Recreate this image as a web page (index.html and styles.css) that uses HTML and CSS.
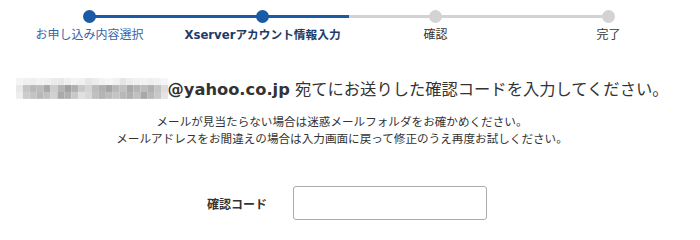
FILE: index.html
```html
<!DOCTYPE html>
<html lang="ja">
<head>
<meta charset="utf-8">
<title>確認コード</title>
<link rel="stylesheet" href="styles.css">
</head>
<body>
<ol class="steps">
  <li class="step done"><span class="step-label">お申し込み内容選択</span></li>
  <li class="step current"><span class="step-label">Xserverアカウント情報入力</span></li>
  <li class="step"><span class="step-label">確認</span></li>
  <li class="step"><span class="step-label">完了</span></li>
</ol>
<main class="content">
  <p class="message"><svg class="mosaic" width="152" height="21" viewBox="0 0 154 21" aria-hidden="true">
    <g>
      <rect x="0" y="0" width="7" height="7" fill="#f4f4f4"/><rect x="7" y="0" width="7" height="7" fill="#f0f0f0"/><rect x="14" y="0" width="7" height="7" fill="#eeeeee"/><rect x="21" y="0" width="7" height="7" fill="#f2f2f2"/><rect x="28" y="0" width="7" height="7" fill="#f0f0f0"/><rect x="35" y="0" width="7" height="7" fill="#eaeaea"/><rect x="42" y="0" width="7" height="7" fill="#e8e8e8"/><rect x="49" y="0" width="7" height="7" fill="#eeeeee"/><rect x="56" y="0" width="7" height="7" fill="#f4f4f4"/><rect x="63" y="0" width="7" height="7" fill="#f0f0f0"/><rect x="70" y="0" width="7" height="7" fill="#e6e6e6"/><rect x="77" y="0" width="7" height="7" fill="#ececec"/><rect x="84" y="0" width="7" height="7" fill="#f2f2f2"/><rect x="91" y="0" width="7" height="7" fill="#f6f6f6"/><rect x="98" y="0" width="7" height="7" fill="#f0f0f0"/><rect x="105" y="0" width="7" height="7" fill="#e4e4e4"/><rect x="112" y="0" width="7" height="7" fill="#ececec"/><rect x="119" y="0" width="7" height="7" fill="#f0f0f0"/><rect x="126" y="0" width="7" height="7" fill="#f2f2f2"/><rect x="133" y="0" width="7" height="7" fill="#eeeeee"/><rect x="140" y="0" width="7" height="7" fill="#f0f0f0"/><rect x="147" y="0" width="7" height="7" fill="#f6f6f6"/>
      <rect x="0" y="7" width="7" height="7" fill="#e8e8e8"/><rect x="7" y="7" width="7" height="7" fill="#c4c4c4"/><rect x="14" y="7" width="7" height="7" fill="#b8b8b8"/><rect x="21" y="7" width="7" height="7" fill="#bcbcbc"/><rect x="28" y="7" width="7" height="7" fill="#a8a8a8"/><rect x="35" y="7" width="7" height="7" fill="#cccccc"/><rect x="42" y="7" width="7" height="7" fill="#b4b4b4"/><rect x="49" y="7" width="7" height="7" fill="#a0a0a0"/><rect x="56" y="7" width="7" height="7" fill="#b0b0b0"/><rect x="63" y="7" width="7" height="7" fill="#c8c8c8"/><rect x="70" y="7" width="7" height="7" fill="#d4d4d4"/><rect x="77" y="7" width="7" height="7" fill="#bcbcbc"/><rect x="84" y="7" width="7" height="7" fill="#b0b0b0"/><rect x="91" y="7" width="7" height="7" fill="#a4a4a4"/><rect x="98" y="7" width="7" height="7" fill="#b8b8b8"/><rect x="105" y="7" width="7" height="7" fill="#c0c0c0"/><rect x="112" y="7" width="7" height="7" fill="#a8a8a8"/><rect x="119" y="7" width="7" height="7" fill="#b4b4b4"/><rect x="126" y="7" width="7" height="7" fill="#bcbcbc"/><rect x="133" y="7" width="7" height="7" fill="#b0b0b0"/><rect x="140" y="7" width="7" height="7" fill="#c4c4c4"/><rect x="147" y="7" width="7" height="7" fill="#dcdcdc"/>
      <rect x="0" y="14" width="7" height="7" fill="#eeeeee"/><rect x="7" y="14" width="7" height="7" fill="#cccccc"/><rect x="14" y="14" width="7" height="7" fill="#c4c4c4"/><rect x="21" y="14" width="7" height="7" fill="#b8b8b8"/><rect x="28" y="14" width="7" height="7" fill="#c0c0c0"/><rect x="35" y="14" width="7" height="7" fill="#d0d0d0"/><rect x="42" y="14" width="7" height="7" fill="#aaaaaa"/><rect x="49" y="14" width="7" height="7" fill="#b0b0b0"/><rect x="56" y="14" width="7" height="7" fill="#c8c8c8"/><rect x="63" y="14" width="7" height="7" fill="#e0e0e0"/><rect x="70" y="14" width="7" height="7" fill="#d8d8d8"/><rect x="77" y="14" width="7" height="7" fill="#c0c0c0"/><rect x="84" y="14" width="7" height="7" fill="#b4b4b4"/><rect x="91" y="14" width="7" height="7" fill="#bcbcbc"/><rect x="98" y="14" width="7" height="7" fill="#c4c4c4"/><rect x="105" y="14" width="7" height="7" fill="#b8b8b8"/><rect x="112" y="14" width="7" height="7" fill="#b0b0b0"/><rect x="119" y="14" width="7" height="7" fill="#c0c0c0"/><rect x="126" y="14" width="7" height="7" fill="#a8a8a8"/><rect x="133" y="14" width="7" height="7" fill="#b8b8b8"/><rect x="140" y="14" width="7" height="7" fill="#c8c8c8"/><rect x="147" y="14" width="7" height="7" fill="#e4e4e4"/>
    </g>
  </svg><strong class="email">@yahoo.co.jp</strong> 宛てにお送りした確認コードを入力してください。</p>
  <p class="note">メールが見当たらない場合は迷惑メールフォルダをお確かめください。<br>メールアドレスをお間違えの場合は入力画面に戻って修正のうえ再度お試しください。</p>
  <div class="form-row">
    <label class="form-label" for="code">確認コード</label>
    <input class="form-input" id="code" type="text">
  </div>
</main>
</body>
</html>
```

FILE: styles.css
```css
html, body {
  margin: 0;
  padding: 0;
  background: #ffffff;
}

body {
  font-family: "DejaVu Sans", "Noto Sans CJK JP", sans-serif;
  color: #333333;
  width: 700px;
}

.steps {
  list-style: none;
  margin: 0;
  padding: 0 5px 0 3px;
  display: flex;
}

.step {
  flex: 1;
  position: relative;
  text-align: center;
  padding-top: 28px;
  height: 14px;
}

.step::before {
  content: "";
  position: absolute;
  top: 15px;
  left: 0;
  right: 0;
  height: 3px;
  background: #d3d3d3;
}

.step:first-child::before { left: 50%; }
.step:last-child::before { right: 50%; }

.step::after {
  content: "";
  position: absolute;
  top: 10px;
  left: 50%;
  width: 13px;
  height: 13px;
  margin-left: -6.5px;
  border-radius: 50%;
  background: #d3d3d3;
}

.step.done::before,
.step.current::before,
.step.done::after,
.step.current::after {
  background: #1b5aa5;
}

.step-label {
  display: block;
  font-size: 12px;
  line-height: 14px;
  white-space: nowrap;
  color: #333333;
}

.step.done .step-label { color: #3a64a8; }
.step.current .step-label { color: #1f3a68; font-weight: bold; font-size: 11.7px; }

.content {
  padding-right: 16px;
  text-align: center;
}

.message {
  margin: 36px 0 0;
  font-size: 16.3px;
  line-height: 24px;
  white-space: nowrap;
}

.mosaic {
  display: inline-block;
  vertical-align: -4px;
}

.email {
  font-weight: bold;
}

.note {
  margin: 12px 0 0;
  font-size: 11.6px;
  line-height: 17px;
}

.form-row {
  margin-top: 38px;
  display: flex;
  justify-content: center;
  align-items: center;
  gap: 26px;
  padding-left: 10px;
}

.form-label {
  width: 60px;
  font-size: 12px;
  font-weight: bold;
  text-align: left;
  white-space: nowrap;
}

.form-input {
  box-sizing: border-box;
  width: 194px;
  height: 34px;
  margin: 0;
  border: 1px solid #ababab;
  border-radius: 3px;
  background: #ffffff;
}
```
